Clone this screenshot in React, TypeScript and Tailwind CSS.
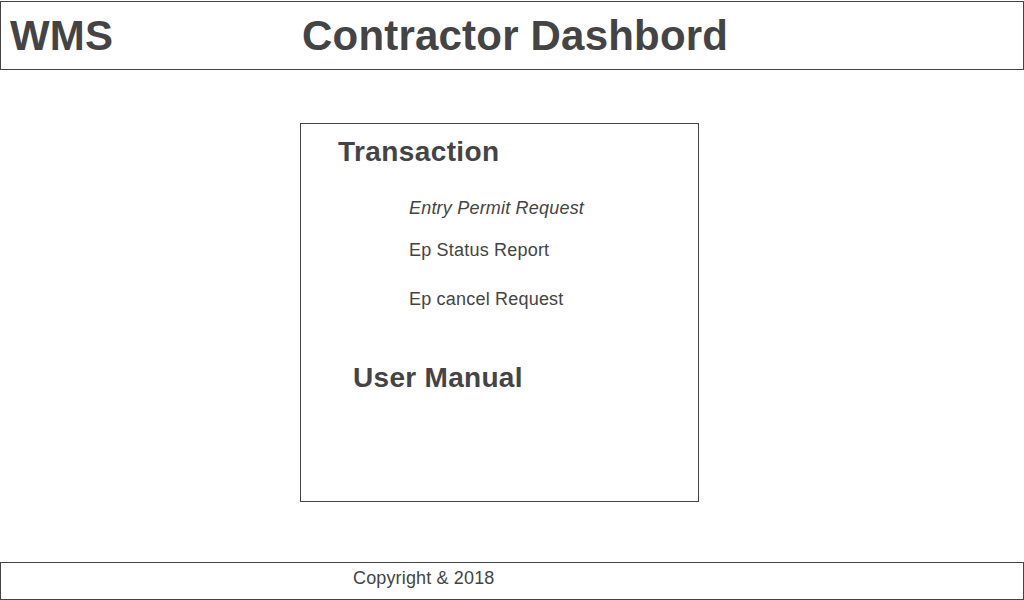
const items = [
  { label: "Entry Permit Request", italic: true, gap: "mt-[28px]" },
  { label: "Ep Status Report", italic: false, gap: "mt-[18px]" },
  { label: "Ep cancel Request", italic: false, gap: "mt-[25px]" },
];

export default function App() {
  return (
    <div className="flex h-[600px] w-[1024px] flex-col bg-white font-['Liberation_Sans',Arial,sans-serif] text-[#444444]">
      {/* header */}
      <header className="mt-px flex h-[69px] items-center border border-[#444444]">
        <div className="w-[301px] pl-[9px] text-[42px] font-bold leading-none tracking-[0.2px]">WMS</div>
        <h1 className="text-[42px] font-bold leading-none tracking-[0.2px]">Contractor Dashbord</h1>
      </header>

      <main className="flex flex-1 pl-[300px] pt-[53px]">
        <div className="flex h-[379px] w-[399px] flex-col border border-[#444444]">
          <h2 className="mt-[12px] pl-[37px] text-[28px] font-bold leading-[32px] tracking-[0.4px]">Transaction</h2>
          <ul className="flex flex-col pl-[108px]">
            {items.map((item) => (
              <li
                key={item.label}
                className={`${item.gap} text-[18px] leading-[24px] tracking-[0.2px] ${item.italic ? "italic" : ""}`}
              >
                {item.label}
              </li>
            ))}
          </ul>
          <h2 className="mt-[51px] pl-[52px] text-[28px] font-bold leading-[32px] tracking-[0.3px]">User Manual</h2>
        </div>
      </main>

      <footer className="flex h-[38px] items-center border border-[#444444] pb-[6px] pl-[352px] text-[18px] leading-[24px] tracking-[0.15px]">
        Copyright &amp; 2018
      </footer>
    </div>
  );
}
